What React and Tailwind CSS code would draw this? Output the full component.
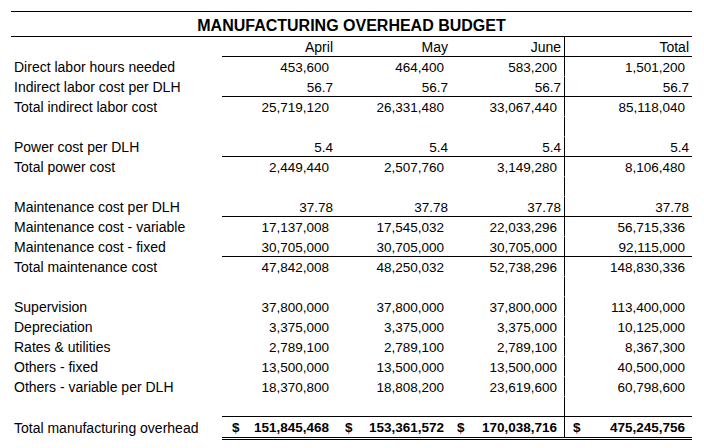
const MONTHS = ['April', 'May', 'June', 'Total']

// line: draw a rule above the numeric cells of that row
const ROWS = [
  { label: 'Direct labor hours needed', vals: ['453,600', '464,400', '583,200', '1,501,200'], line: true },
  { label: 'Indirect labor cost per DLH', vals: ['56.7', '56.7', '56.7', '56.7'], dec: true },
  { label: 'Total indirect labor cost', vals: ['25,719,120', '26,331,480', '33,067,440', '85,118,040'], line: true },
  {},
  { label: 'Power cost per DLH', vals: ['5.4', '5.4', '5.4', '5.4'], dec: true },
  { label: 'Total power cost', vals: ['2,449,440', '2,507,760', '3,149,280', '8,106,480'], line: true },
  {},
  { label: 'Maintenance cost per DLH', vals: ['37.78', '37.78', '37.78', '37.78'], dec: true },
  { label: 'Maintenance cost - variable', vals: ['17,137,008', '17,545,032', '22,033,296', '56,715,336'], line: true },
  { label: 'Maintenance cost - fixed', vals: ['30,705,000', '30,705,000', '30,705,000', '92,115,000'] },
  { label: 'Total maintenance cost', vals: ['47,842,008', '48,250,032', '52,738,296', '148,830,336'], line: true },
  {},
  { label: 'Supervision', vals: ['37,800,000', '37,800,000', '37,800,000', '113,400,000'] },
  { label: 'Depreciation', vals: ['3,375,000', '3,375,000', '3,375,000', '10,125,000'] },
  { label: 'Rates & utilities', vals: ['2,789,100', '2,789,100', '2,789,100', '8,367,300'] },
  { label: 'Others - fixed', vals: ['13,500,000', '13,500,000', '13,500,000', '40,500,000'] },
  { label: 'Others - variable per DLH', vals: ['18,370,800', '18,808,200', '23,619,600', '60,798,600'] },
  {},
]

const TOTALS = ['151,845,468', '153,361,572', '170,038,716', '475,245,756']
const DOLLAR_PAD = ['pl-[10px]', 'pl-[9px]', 'pl-[6px]', 'pl-[8px]']

const cols = 'grid grid-cols-[211px_114px_115px_113px_128px]'

function Cell({ i, line, dec, head, children }) {
  return (
    <div
      className={
        'h-[20px] border-t text-right leading-[21px] ' +
        (head ? 'text-[14px] ' : 'text-[13.5px] ') +
        (line ? 'border-black ' : 'border-transparent ') +
        (i === 3 ? 'border-l border-l-black ' : '') +
        (dec ? 'pr-[3px]' : 'pr-[7px]')
      }
    >
      {children}
    </div>
  )
}

export default function App() {
  return (
    <div
      className="w-[704px] h-[448px] bg-white text-black pt-[11px] pl-[11px] text-[14px]"
      style={{ fontFamily: '"Liberation Sans", Arial, sans-serif' }}
    >
      <div className="w-[681px]">
        <div className="h-[25px] border-t border-black pt-[3px] text-center text-[16px] font-bold leading-[21px]">
          MANUFACTURING OVERHEAD BUDGET
        </div>

        <div className={cols}>
          <div className="h-[20px] border-t border-black" />
          {MONTHS.map((m, i) => (
            <Cell key={m} i={i} line dec head>
              {m}
            </Cell>
          ))}

          {ROWS.map((r, ri) => (
            <div key={ri} className="contents">
              <div className="h-[20px] border-t border-transparent pl-[3px] leading-[21px] whitespace-nowrap">
                {r.label}
              </div>
              {[0, 1, 2, 3].map((i) => (
                <Cell key={i} i={i} line={r.line} dec={r.dec}>
                  {r.vals ? r.vals[i] : ''}
                </Cell>
              ))}
            </div>
          ))}

          <div className="h-[21px] border-t border-transparent pl-[3px] leading-[22px] whitespace-nowrap">
            Total manufacturing overhead
          </div>
          {TOTALS.map((t, i) => (
            <div
              key={t}
              className={
                'h-[21px] border-t border-black flex justify-between font-bold text-[13.5px] leading-[22px] pr-[7px] ' +
                DOLLAR_PAD[i] +
                (i === 3 ? ' border-l border-l-black' : '')
              }
            >
              <span>$</span>
              <span>{t}</span>
            </div>
          ))}
        </div>

        <div className="ml-[211px] h-[3px] border-y border-black" />
      </div>
    </div>
  )
}
